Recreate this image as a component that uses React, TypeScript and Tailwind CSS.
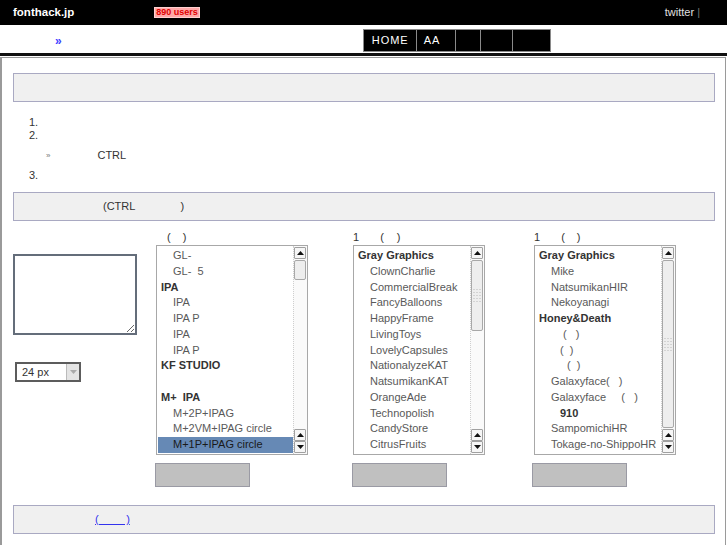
import React from 'react';

type Row = { t: string; h?: boolean; sel?: boolean; extra?: string };

const list1: Row[] = [
  { t: 'GL-' },
  { t: 'GL-  5' },
  { t: 'IPA', h: true },
  { t: 'IPA' },
  { t: 'IPA P' },
  { t: 'IPA' },
  { t: 'IPA P' },
  { t: 'KF STUDIO', h: true },
  { t: '' },
  { t: 'M+  IPA', h: true },
  { t: 'M+2P+IPAG' },
  { t: 'M+2VM+IPAG circle' },
  { t: 'M+1P+IPAG circle', sel: true },
];

const list2: Row[] = [
  { t: 'Gray Graphics', h: true },
  { t: 'ClownCharlie' },
  { t: 'CommercialBreak' },
  { t: 'FancyBalloons' },
  { t: 'HappyFrame' },
  { t: 'LivingToys' },
  { t: 'LovelyCapsules' },
  { t: 'NationalyzeKAT' },
  { t: 'NatsumikanKAT' },
  { t: 'OrangeAde' },
  { t: 'Technopolish' },
  { t: 'CandyStore' },
  { t: 'CitrusFruits' },
];

const list3: Row[] = [
  { t: 'Gray Graphics', h: true },
  { t: 'Mike' },
  { t: 'NatsumikanHIR' },
  { t: 'Nekoyanagi' },
  { t: 'Honey&Death', h: true },
  { t: '(   )', extra: 'pl-[27px]' },
  { t: '(  )', extra: 'pl-[24px]' },
  { t: '(  )', extra: 'pl-[31px]' },
  { t: 'Galaxyface(   )' },
  { t: 'Galaxyface     (   )' },
  { t: '910', h: true, extra: 'pl-[24px]' },
  { t: 'SampomichiHR' },
  { t: 'Tokage-no-ShippoHR' },
];

function Arrow({ up }: { up?: boolean }) {
  return (
    <div className="flex h-[12px] w-full items-center justify-center rounded-[1px] border border-[#a0a0a0] bg-[#f6f6f6]">
      <svg width="7" height="4" viewBox="0 0 7 4">
        {up ? <path d="M0 4 L3.5 0 L7 4 Z" fill="#111" /> : <path d="M0 0 L3.5 4 L7 0 Z" fill="#111" />}
      </svg>
    </div>
  );
}

function Grip() {
  return (
    <svg width="8" height="15" viewBox="0 0 8 15">
      {[0, 3, 6, 9, 12].map((y) =>
        [0, 3, 6].map((x) => <rect key={`${x}-${y}`} x={x + 0.5} y={y + 1} width="1" height="1" fill="#b8b8b8" />)
      )}
    </svg>
  );
}

function Scrollbar({ thumb, grip }: { thumb: string; grip?: boolean }) {
  return (
    <div className="flex w-[14px] flex-col border-l border-dotted border-[#cfcfcf] bg-[#fafafa] py-[1px] pr-[1px]">
      <Arrow up />
      <div className="flex-1 pt-[1px]">
        <div className={`${thumb} flex items-center justify-center rounded-[2px] border border-[#a8a8a8] bg-[#eeeeee]`}>
          {grip && <Grip />}
        </div>
      </div>
      <Arrow up />
      <Arrow />
    </div>
  );
}

function ListBox({ rows, width, thumb, grip }: { rows: Row[]; width: string; thumb: string; grip?: boolean }) {
  return (
    <div className={`${width} flex h-[210px] border border-[#a8a8a8] bg-white`}>
      <div className="flex-1 overflow-hidden pl-[1px] pt-[2px] text-[11px]">
        {rows.map((r, i) => (
          <div
            key={i}
            className={[
              'h-[15.75px] whitespace-pre leading-[15.75px]',
              r.h ? 'pl-[3px] font-bold text-[#333]' : 'pl-[15px]',
              r.sel ? 'bg-[#6689b5] text-[#1a1a1a]' : r.h ? '' : 'text-[#595959]',
              r.extra ?? '',
            ].join(' ')}
          >
            {r.t}
          </div>
        ))}
      </div>
      <Scrollbar thumb={thumb} grip={grip} />
    </div>
  );
}

function GrayButton({ shift }: { shift: string }) {
  return <div className={`${shift} mt-[8px] h-[24px] w-[95px] border border-[#9a9aa4] bg-[#c0c0c0]`} />;
}

export default function App() {
  return (
    <div className="h-[545px] w-[727px] overflow-hidden bg-white font-['Liberation_Sans',Arial,sans-serif] text-[11px] text-[#333]">
      {/* top bar */}
      <div className="flex h-[25px] items-center bg-black pl-[13px] pr-[27px]">
        <span className="mt-[1px] text-[11.5px] font-bold text-white">fonthack.jp</span>
        <span className="ml-[80px] border border-[#ffd0d0] bg-[#ffa8a8] px-[1px] text-[9px] font-bold leading-[9px] text-[#e00000]">
          890 users
        </span>
        <span className="ml-auto text-[11px] text-[#e0e0e0]">
          twitter <span className="text-[#777]">|</span>
        </span>
      </div>

      {/* nav row */}
      <div className="flex h-[28px]">
        <span className="ml-[55px] mt-[7px] text-[12px] font-bold text-[#4040ff]">»</span>
        <div className="ml-[301px] mt-[4px] flex h-[23px] text-[11px] tracking-[1px] text-white">
          <div className="flex w-[53px] items-center border border-r-0 border-[#8a8a8a] bg-black pl-[8px]">HOME</div>
          <div className="flex w-[39px] items-center border border-r-0 border-[#8a8a8a] bg-black pl-[7px]">AA</div>
          <div className="w-[25px] border border-r-0 border-[#8a8a8a] bg-black" />
          <div className="w-[32px] border border-r-0 border-[#8a8a8a] bg-black" />
          <div className="w-[39px] border border-[#8a8a8a] bg-black" />
        </div>
      </div>
      <div className="h-[3px] bg-[#111]" />
      <div className="h-[1px]" />

      {/* main container */}
      <div className="mr-[1px] border border-l-2 border-[#9a9a9a] pb-[20px] pl-[11px] pr-[10px] pt-[15px]">
        <div className="h-[29px] border border-[#a9a9c2] bg-[#f0f0f0]" />

        <div className="mt-[14px] text-[11px] text-[#333]">
          <div className="h-[13px] pl-[16px] leading-[13px]">1.</div>
          <div className="h-[13px] pl-[16px] leading-[13px]">2.</div>
          <div className="mt-[7px] flex h-[13px] leading-[13px]">
            <span className="pl-[33px] text-[8px] text-[#777]">»</span>
            <span className="ml-[47px]">CTRL</span>
          </div>
          <div className="mt-[7px] h-[13px] pl-[16px] leading-[13px]">3.</div>
        </div>

        <div className="mt-[10px] flex h-[29px] items-center border border-[#a9a9c2] bg-[#f0f0f0] pl-[89px]">
          <span>(CTRL</span>
          <span className="ml-[45px]">)</span>
        </div>

        {/* selectors */}
        <div className="mt-[8px] flex">
          <div className="w-[143px]">
            <textarea className="mt-[25px] block h-[81px] w-[124px] resize border-2 border-[#646d7a] bg-white outline-none" />
            <div className="ml-[2px] mt-[27px] flex h-[20px] w-[66px] items-center border-2 border-[#5c5c5c] bg-white">
              <span className="flex-1 pl-[5px] text-[11px] text-[#333]">24 px</span>
              <div className="flex h-full w-[13px] items-center justify-center border-l border-[#bbb] bg-[#e4e4e4]">
                <svg width="7" height="4" viewBox="0 0 7 4">
                  <path d="M0 0 L3.5 4 L7 0 Z" fill="#aaa" />
                </svg>
              </div>
            </div>
          </div>

          <div className="w-[152px]">
            <div className="flex h-[16px] items-center whitespace-pre pl-[11px]">
              <span>(</span>
              <span className="ml-[12px]">)</span>
            </div>
            <ListBox rows={list1} width="w-[152px]" thumb="h-[20px]" />
            <GrayButton shift="-ml-[1px]" />
          </div>

          <div className="ml-[45px] w-[132px]">
            <div className="flex h-[16px] items-center">
              <span>1</span>
              <span className="ml-[21px]">(</span>
              <span className="ml-[13px]">)</span>
            </div>
            <ListBox rows={list2} width="w-[132px]" thumb="h-[71px]" grip />
            <GrayButton shift="-ml-[1px]" />
          </div>

          <div className="ml-[49px] w-[142px]">
            <div className="flex h-[16px] items-center">
              <span>1</span>
              <span className="ml-[21px]">(</span>
              <span className="ml-[12px]">)</span>
            </div>
            <ListBox rows={list3} width="w-[142px]" thumb="h-[168px]" grip />
            <GrayButton shift="-ml-[2px]" />
          </div>
        </div>

        <div className="mt-[18px] flex h-[29px] items-center border border-[#a9a9c2] bg-[#f0f0f0] pl-[81px]">
          <a className="whitespace-pre text-[#3333ee] underline">{'(         )'}</a>
        </div>
      </div>
    </div>
  );
}
